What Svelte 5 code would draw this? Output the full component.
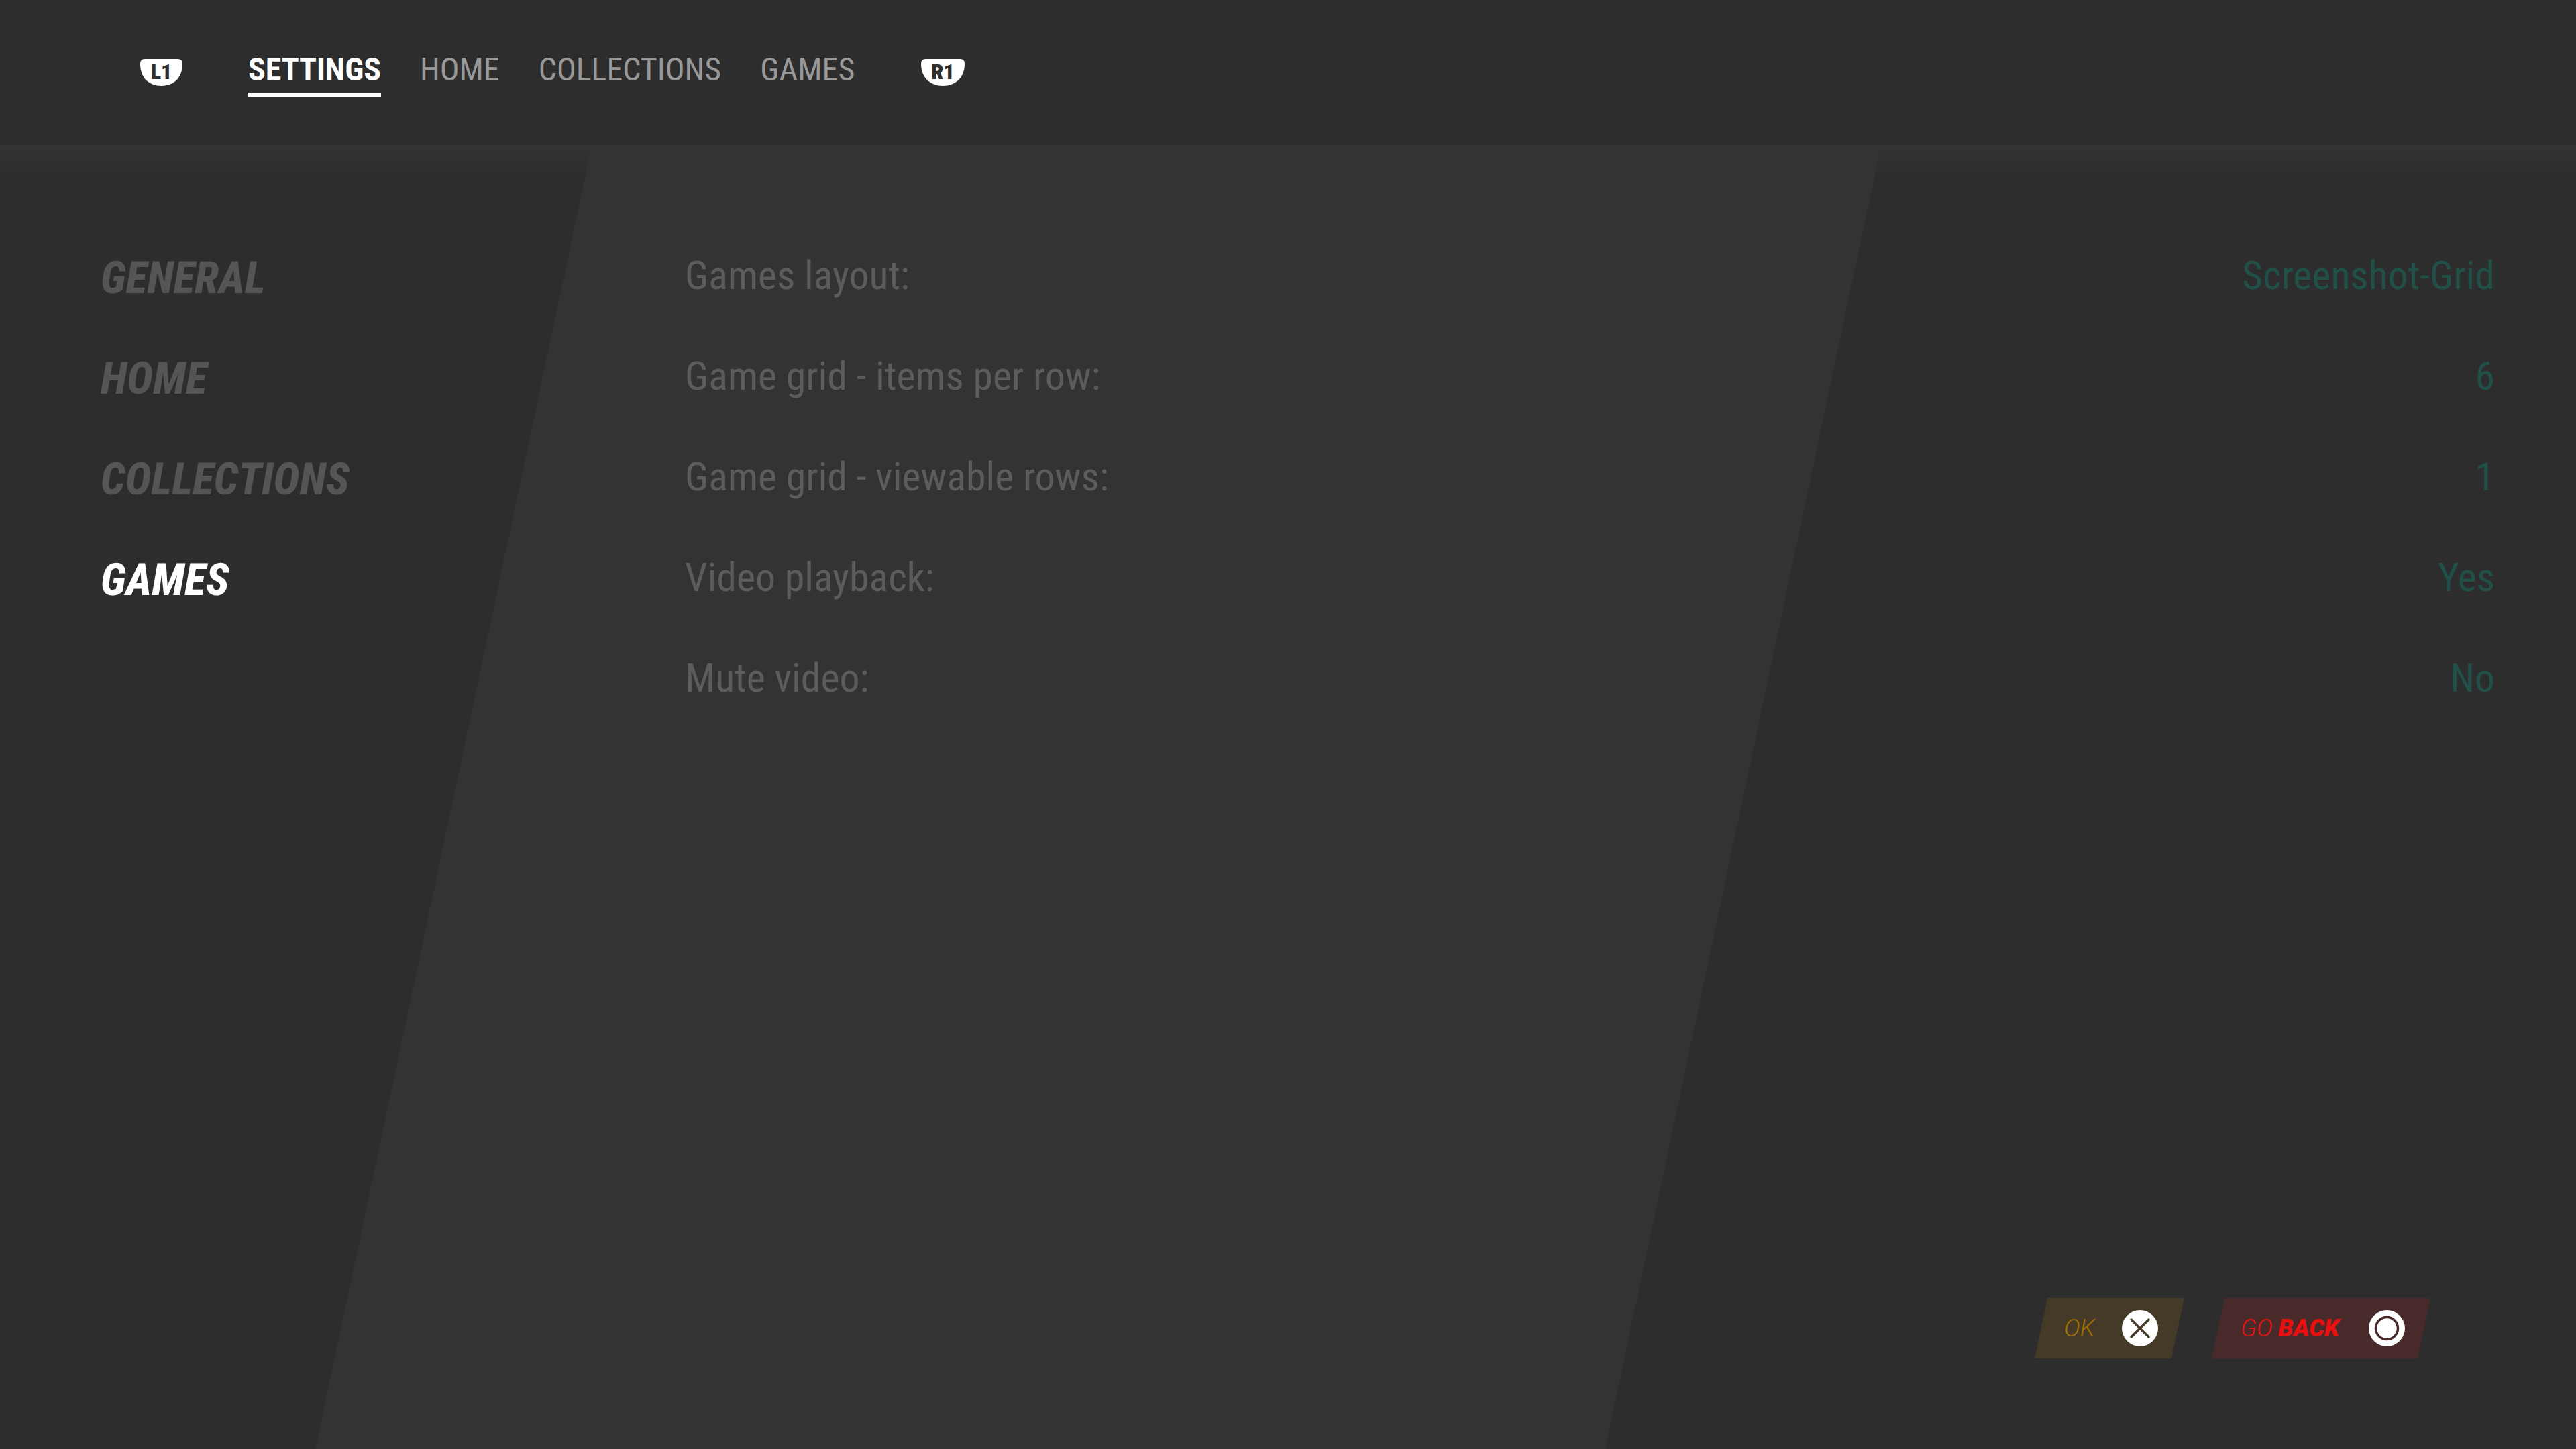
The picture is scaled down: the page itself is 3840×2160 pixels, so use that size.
<script>
  const tabs = ['SETTINGS', 'HOME', 'COLLECTIONS', 'GAMES'];
  const sections = ['GENERAL', 'HOME', 'COLLECTIONS', 'GAMES'];
  const options = [
    ['Games layout:', 'Screenshot-Grid'],
    ['Game grid - items per row:', '6'],
    ['Game grid - viewable rows:', '1'],
    ['Video playback:', 'Yes'],
    ['Mute video:', 'No']
  ];
</script>

<div class="screen">
  <div class="band"></div>
  <div class="shade"></div>

  <header>
    <svg class="shoulder l1" viewBox="0 0 63 40">
      <path d="M7 0H56Q63 0 63 7C63 28 50 40 31.500 40C13 40 0 28 0 7Q0 0 7 0Z" fill="#fff" />
      <text x="31.500" y="29.500" class="btn">L1</text>
    </svg>
    <nav>
      {#each tabs as tab, i}
        <span class="tab" class:active={i === 0}>{tab}</span>
      {/each}
    </nav>
    <svg class="shoulder r1" viewBox="0 0 65 40">
      <path d="M7 0H58Q65 0 65 7C65 28 51 40 32.500 40C14 40 0 28 0 7Q0 0 7 0Z" fill="#fff" />
      <text x="32.500" y="29.500" class="btn">R1</text>
    </svg>
  </header>

  <main>
    <ul class="sections">
      {#each sections as s, i}
        <li class:current={i === 3}>{s}</li>
      {/each}
    </ul>
    <div class="options">
      {#each options as [label, value]}
        <div class="row">
          <span class="label">{label}</span>
          <span class="value">{value}</span>
        </div>
      {/each}
    </div>
  </main>

  <footer>
    <div class="hint ok">
      <span class="hint-text">OK</span>
      <svg class="face" viewBox="0 0 54 54">
        <circle cx="27" cy="27" r="27" fill="#fff" />
        <path d="M14 14L40 40M40 14L14 40" stroke="#453a28" stroke-width="3.500" stroke-linecap="round" />
      </svg>
    </div>
    <div class="hint back">
      <span class="hint-text">GO <b>BACK</b></span>
      <svg class="face" viewBox="0 0 54 54">
        <circle cx="27" cy="27" r="27" fill="#fff" />
        <circle cx="27" cy="27" r="16.500" fill="none" stroke="#482a2a" stroke-width="3.500" />
      </svg>
    </div>
  </footer>
</div>

<style>
  :global(body) { margin: 0; background: #2d2d2d; }
  .screen {
    position: relative;
    width: 3840px;
    height: 2160px;
    overflow: hidden;
    display: flex;
    flex-direction: column;
    background: #2d2d2d;
    font-family: "Roboto Condensed", Roboto, sans-serif;
  }
  .band {
    position: absolute;
    inset: 0;
    background: #333;
    clip-path: polygon(928px 0, 2850px 0, 2393px 2160px, 470px 2160px);
  }
  .shade {
    position: absolute;
    left: 0;
    right: 0;
    top: 216px;
    height: 50px;
    background: linear-gradient(#333, rgba(51, 51, 51, 0));
  }

  header {
    position: relative;
    height: 216px;
    background: #2d2d2d;
    display: flex;
    align-items: flex-start;
    box-sizing: border-box;
    padding-left: 209px;
  }
  .shoulder { height: 40px; margin-top: 88px; }
  .l1 { width: 63px; }
  .r1 { width: 65px; margin-left: 99px; }
  .btn { font-size: 32px; font-weight: 900; text-anchor: middle; fill: #2d2d2d; }
  nav { display: flex; gap: 58px; margin-left: 98px; margin-top: 72px; }
  .tab { font-size: 48px; line-height: 64px; color: #999; height: 72px; }
  .tab.active { color: #fff; font-weight: 700; letter-spacing: -0.1px; border-bottom: 6px solid #fff; height: 66px; }

  main {
    position: relative;
    flex: 1;
    display: flex;
    padding: 120px 121px 0 150px;
  }
  .sections {
    list-style: none;
    margin: 4px 0 0;
    padding: 0;
    width: 871px;
  }
  .sections li {
    font-size: 66px;
    line-height: 150px;
    font-weight: 800;
    font-style: italic;
    letter-spacing: 0.2px;
    color: #555;
  }
  .sections li.current { color: #fff; }
  .options { flex: 1; }
  .row {
    height: 150px;
    display: flex;
    justify-content: space-between;
    align-items: center;
    font-size: 59.800px;
  }
  .label { color: #5c5c5c; }
  .value { color: #215048; }

  footer {
    position: absolute;
    right: 217px;
    bottom: 135px;
    display: flex;
    gap: 41px;
  }
  .hint {
    height: 90px;
    display: flex;
    align-items: center;
    justify-content: space-between;
    box-sizing: border-box;
  }
  .ok {
    width: 223px;
    padding: 0 39px 0 44px;
    background: #453a28;
    clip-path: polygon(19px 0, 100% 0, 204px 100%, 0 100%);
  }
  .back {
    width: 326px;
    padding: 0 38px 0 43px;
    background: #482a2a;
    clip-path: polygon(19px 0, 100% 0, 307px 100%, 0 100%);
  }
  .hint-text { font-family: Roboto, sans-serif; font-size: 36px; font-style: italic; font-weight: 300; }
  .ok .hint-text { color: #a07000; }
  .back .hint-text { color: #ea1010; }
  .back b { font-weight: 900; }
  .face { width: 54px; height: 54px; }
</style>
